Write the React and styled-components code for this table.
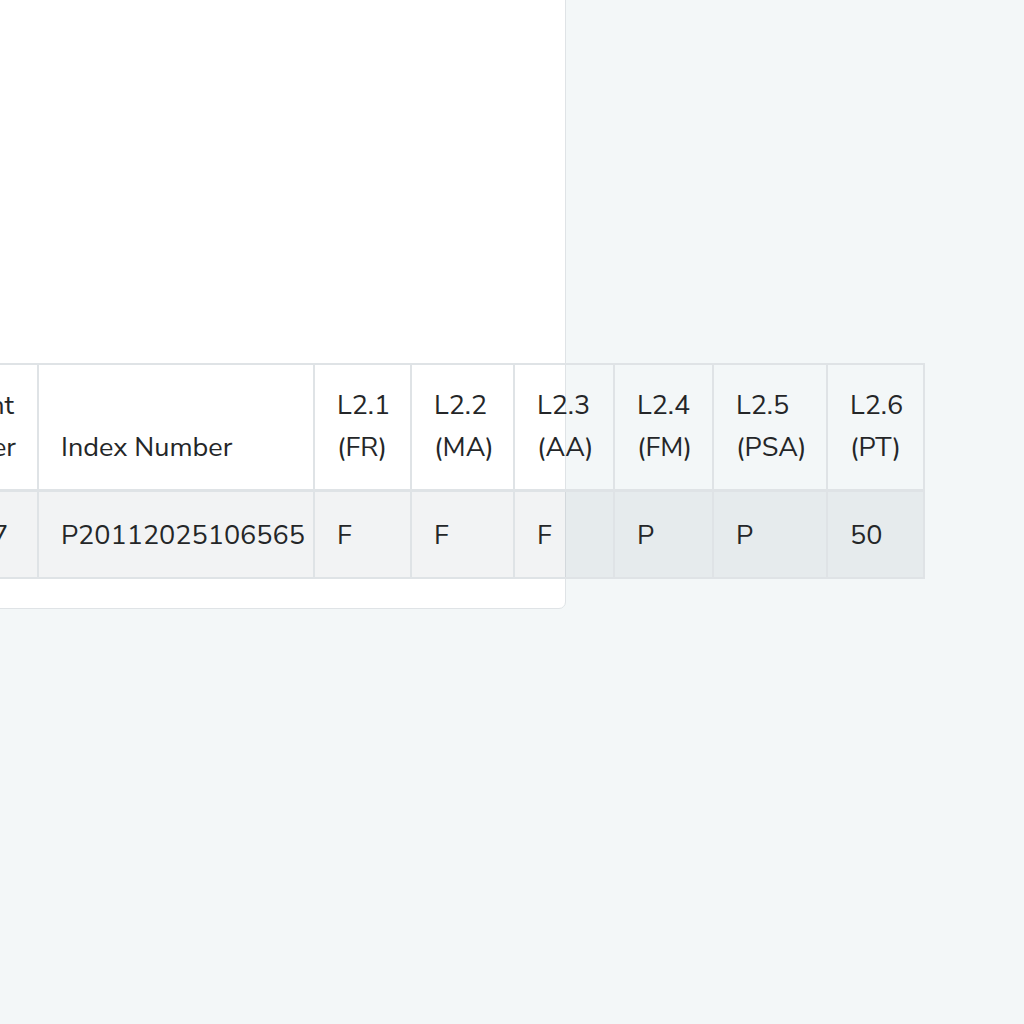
import React from "react";
import styled, { createGlobalStyle } from "styled-components";

const GlobalStyle = createGlobalStyle`
  html, body {
    margin: 0;
    padding: 0;
    background: #f3f7f8;
    font-family: "Nunito Sans", Lato, "Noto Sans", sans-serif;
    color: #242628;
    overflow: hidden;
  }
`;

const Page = styled.div`
  width: 1024px;
  height: 1024px;
  display: flex;
  align-items: flex-start;
`;

const Card = styled.div`
  margin-left: -125px;
  margin-top: -20px;
  width: 691px;
  padding: 0 24px 29px 24px;
  background: #ffffff;
  border: 1px solid #dfe3e6;
  border-radius: 0 0 7px 7px;
  box-sizing: border-box;
`;

const CardBody = styled.div`
  height: 382px;
`;

const Table = styled.table`
  border-collapse: collapse;
  table-layout: fixed;
  width: 1023px;
  font-size: 27px;
`;

const HeadCell = styled.th`
  box-sizing: border-box;
  width: ${p => p.w}px;
  text-align: left;
  vertical-align: bottom;
  font-weight: 400;
  line-height: 42px;
  padding: 20px 10px 20px ${p => (p.first ? 16 : 22)}px;
  border: 2px solid #dfe3e6;
  border-bottom-width: 3px;
  white-space: nowrap;
  overflow: visible;
`;

const BodyRow = styled.tr`
  background: rgba(40, 50, 60, 0.06);
`;

const Cell = styled.td`
  box-sizing: border-box;
  line-height: 42px;
  padding: 23px 10px 20px ${p => (p.first ? 9 : 22)}px;
  border: 2px solid #dfe3e6;
  white-space: nowrap;
  overflow: visible;
`;

const columns = [
  { w: 137, head: ["Student", "Number"], value: "201947", first: true },
  { w: 276, head: ["Index Number"], value: "P20112025106565" },
  { w: 97, head: ["L2.1", "(FR)"], value: "F" },
  { w: 103, head: ["L2.2", "(MA)"], value: "F" },
  { w: 100, head: ["L2.3", "(AA)"], value: "F" },
  { w: 99, head: ["L2.4", "(FM)"], value: "P" },
  { w: 114, head: ["L2.5", "(PSA)"], value: "P" },
  { w: 97, head: ["L2.6", "(PT)"], value: "50" },
];

export default function App() {
  return (
    <Page>
      <GlobalStyle />
      <Card>
        <CardBody />
        <Table>
          <thead>
            <tr>
              {columns.map((c, i) => (
                <HeadCell key={i} w={c.w} first={c.first}>
                  {c.head.map((line, j) => (
                    <React.Fragment key={j}>
                      {j > 0 && <br />}
                      {line}
                    </React.Fragment>
                  ))}
                </HeadCell>
              ))}
            </tr>
          </thead>
          <tbody>
            <BodyRow>
              {columns.map((c, i) => (
                <Cell key={i} first={c.first}>
                  {c.value}
                </Cell>
              ))}
            </BodyRow>
          </tbody>
        </Table>
      </Card>
    </Page>
  );
}
